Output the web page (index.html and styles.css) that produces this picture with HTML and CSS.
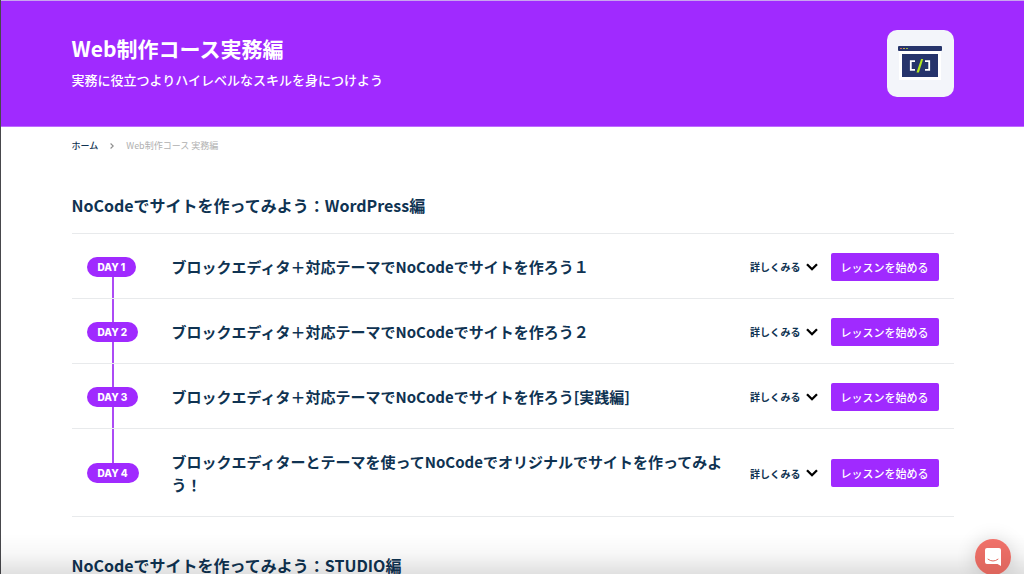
FILE: index.html
```html
<!DOCTYPE html>
<html lang="ja">
<head>
<meta charset="utf-8">
<meta name="viewport" content="width=device-width, initial-scale=1">
<title>Web制作コース実務編</title>
<link rel="stylesheet" href="styles.css">
</head>
<body>
<header class="hero">
  <div class="container hero-inner">
    <div>
      <h1 class="hero-title">Web制作コース実務編</h1>
      <p class="hero-text">実務に役立つよりハイレベルなスキルを身につけよう</p>
    </div>
    <div class="course-icon">
      <svg viewBox="0 0 44 34" width="44" height="34" aria-hidden="true">
        <rect x="1" y="1" width="42" height="33" fill="#fff"/>
        <rect x="0" y="0" width="44" height="5" rx="1" fill="#26346b"/>
        <rect x="2" y="2" width="2" height="1" fill="#c66a5c"/>
        <rect x="5" y="2" width="2" height="1" fill="#c9a64e"/>
        <rect x="8" y="2" width="2" height="1" fill="#8fb84a"/>
        <rect x="4" y="8" width="36" height="23" fill="#26346b"/>
        <path d="M17 15.2h-4.2v8.6H17M27 15.2h4.2v8.6H27" fill="none" stroke="#fff" stroke-width="1.8"/>
        <path d="M23.1 13H25.2L20.9 26.5H18.5Z" fill="#b4e61e"/>
      </svg>
    </div>
  </div>
</header>
<main class="container">
  <nav class="breadcrumb" aria-label="パンくず">
    <a class="breadcrumb-link" href="#">ホーム</a>
    <svg class="breadcrumb-arrow" viewBox="0 0 4 6" width="4" height="6" aria-hidden="true"><path d="M.6.5 3.2 3 .6 5.5" fill="none" stroke="#8c8c8c" stroke-width="1.1"/></svg>
    <span>Web制作コース 実務編</span>
  </nav>
  <section class="course">
    <h2 class="course-title">NoCodeでサイトを作ってみよう：WordPress編</h2>
    <ol class="lessons">
      <li class="lesson">
        <div class="day"><span class="badge">DAY 1</span></div>
        <h3 class="lesson-title">ブロックエディタ＋対応テーマでNoCodeでサイトを作ろう１</h3>
        <button class="details" type="button">詳しくみる<svg viewBox="0 0 12 8" width="12" height="8" aria-hidden="true"><path d="M1 1.2 6 6.2 11 1.2" fill="none" stroke="#000" stroke-width="2.3"/></svg></button>
        <a class="start" href="#">レッスンを始める</a>
      </li>
      <li class="lesson">
        <div class="day"><span class="badge">DAY 2</span></div>
        <h3 class="lesson-title">ブロックエディタ＋対応テーマでNoCodeでサイトを作ろう２</h3>
        <button class="details" type="button">詳しくみる<svg viewBox="0 0 12 8" width="12" height="8" aria-hidden="true"><path d="M1 1.2 6 6.2 11 1.2" fill="none" stroke="#000" stroke-width="2.3"/></svg></button>
        <a class="start" href="#">レッスンを始める</a>
      </li>
      <li class="lesson">
        <div class="day"><span class="badge">DAY 3</span></div>
        <h3 class="lesson-title">ブロックエディタ＋対応テーマでNoCodeでサイトを作ろう[実践編]</h3>
        <button class="details" type="button">詳しくみる<svg viewBox="0 0 12 8" width="12" height="8" aria-hidden="true"><path d="M1 1.2 6 6.2 11 1.2" fill="none" stroke="#000" stroke-width="2.3"/></svg></button>
        <a class="start" href="#">レッスンを始める</a>
      </li>
      <li class="lesson">
        <div class="day"><span class="badge">DAY 4</span></div>
        <h3 class="lesson-title">ブロックエディターとテーマを使ってNoCodeでオリジナルでサイトを作ってみよう！</h3>
        <button class="details" type="button">詳しくみる<svg viewBox="0 0 12 8" width="12" height="8" aria-hidden="true"><path d="M1 1.2 6 6.2 11 1.2" fill="none" stroke="#000" stroke-width="2.3"/></svg></button>
        <a class="start" href="#">レッスンを始める</a>
      </li>
    </ol>
  </section>
  <section class="course">
    <h2 class="course-title">NoCodeでサイトを作ってみよう：STUDIO編</h2>
  </section>
</main>
<div class="bottom-shade"></div>
<button class="chat" type="button" aria-label="チャットを開く">
  <svg viewBox="0 0 16 18" width="16" height="18" aria-hidden="true">
    <path d="M2 0H14Q16 0 16 2V18L12.5 16H2Q0 16 0 14V2Q0 0 2 0Z" fill="#fff"/>
    <path d="M3 11.2Q8 15 13 11.2" fill="none" stroke="#e3695f" stroke-width="1" stroke-linecap="round"/>
  </svg>
</button>
</body>
</html>
```
FILE: styles.css
```css
* {
  box-sizing: border-box;
}

body {
  margin: 0;
  border-left: 1px solid #48484c;
  background: #fff;
  color: #0f3352;
  font-family: "Noto Sans CJK JP", sans-serif;
}

h1, h2, h3, p, ol {
  margin: 0;
  padding: 0;
}

a {
  color: inherit;
  text-decoration: none;
}

button {
  border: 0;
  font-family: inherit;
  color: inherit;
  cursor: pointer;
}

.container {
  max-width: 882px;
  margin: 0 auto;
}

.hero {
  padding: 29px 0;
  border-top: 1px solid #c9a5ee;
  border-bottom: 1px solid #bd6cff;
  background: #a02aff;
  color: #fff;
}

.hero-inner {
  display: flex;
  justify-content: space-between;
  align-items: flex-start;
}

.hero-title {
  padding-top: 3px;
  font-size: 21px;
  line-height: 30px;
}

.hero-text {
  padding-top: 7px;
  font-size: 13px;
  font-weight: 500;
  line-height: 20px;
}

.course-icon {
  display: flex;
  justify-content: center;
  width: 67px;
  height: 67px;
  padding-top: 16px;
  border-radius: 10px;
  background: #f3f5fa;
}

.breadcrumb {
  display: flex;
  align-items: center;
  gap: 12px;
  padding: 12px 0 4px;
  font-size: 9px;
  line-height: 14px;
  color: #b0b0b0;
}

.breadcrumb-link {
  color: #0f3352;
  font-weight: 500;
}

.course {
  padding-top: 35px;
}

.course-title {
  padding: 0 0 15px;
  font-size: 16px;
  line-height: 26px;
}

.lessons {
  border-top: 1px solid #e8eaec;
  list-style: none;
}

.lesson {
  position: relative;
  display: flex;
  align-items: center;
  padding: 21px 15px 20px;
  border-bottom: 1px solid #e8eaec;
}

.lesson::before {
  content: "";
  position: absolute;
  top: 0;
  bottom: 0;
  left: 40px;
  width: 2px;
  background: #ac4bf5;
}

.lesson:first-child::before {
  top: 50%;
}

.lesson:last-child::before {
  bottom: 50%;
}

.day {
  position: relative;
  display: flex;
  flex: none;
  width: 85px;
}

.badge {
  padding: 0 11px;
  border-radius: 10px;
  background: #a02aff;
  color: #fff;
  font-family: Inter, sans-serif;
  font-size: 10px;
  font-weight: 800;
  line-height: 20px;
}

.lesson-title {
  flex: 1;
  font-size: 15px;
  line-height: 23px;
}

.details {
  display: flex;
  flex: none;
  align-items: center;
  gap: 5px;
  padding: 0;
  margin: 0 13px 0 16px;
  background: none;
  font-size: 10px;
  font-weight: 700;
}

.start {
  flex: none;
  margin: -3px 0;
  padding: 0 10px;
  border-radius: 2px;
  background: #a02aff;
  color: #fff;
  font-size: 11px;
  font-weight: 500;
  line-height: 28px;
}

.bottom-shade {
  position: fixed;
  right: 0;
  bottom: 0;
  left: 0;
  height: 40px;
  background: linear-gradient(rgba(0, 0, 0, 0), rgba(0, 0, 0, 0.03) 50%, rgba(0, 0, 0, 0.12));
  pointer-events: none;
}

.chat {
  position: fixed;
  right: 13px;
  bottom: -1px;
  display: flex;
  align-items: center;
  justify-content: center;
  width: 36px;
  height: 36px;
  padding: 0;
  border-radius: 50%;
  background: linear-gradient(#f0716a, #dc655c);
  box-shadow: 0 1px 20px rgba(0, 0, 0, 0.16);
}
```
